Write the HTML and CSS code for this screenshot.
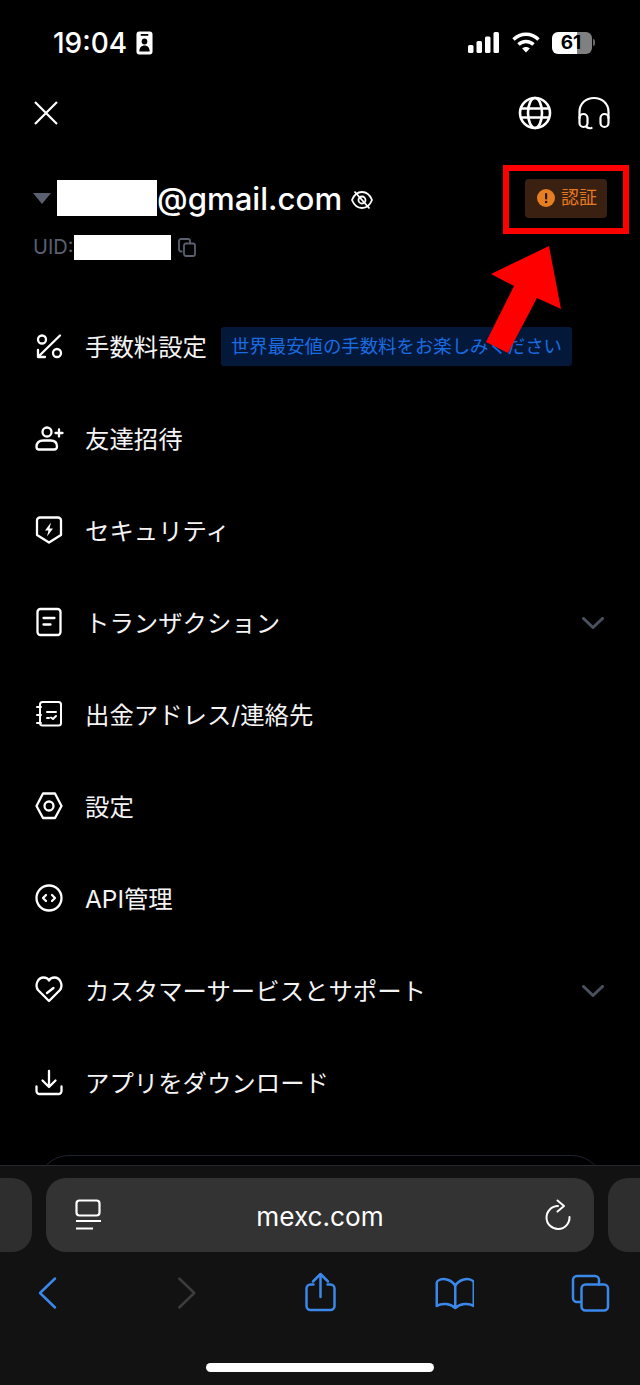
FILE: index.html
```html
<!DOCTYPE html>
<html lang="ja">
<head>
<meta charset="utf-8">
<title>MEXC</title>
<link rel="stylesheet" href="styles.css">
</head>
<body>
<div class="phone">
  <main class="content">
    <div class="status">
      <div class="status-left">
        <span class="time">19:04</span>
        <svg class="id-badge" width="17" height="24" viewBox="0 0 18 24" preserveAspectRatio="none"><rect x="0.5" y="0.5" width="17" height="23" rx="3" fill="#fff"/><rect x="5" y="3" width="8" height="1.8" fill="#000"/><circle cx="9" cy="10.5" r="3" fill="#000"/><path d="M3.5 20.500c0-4 2.500-6 5.500-6s5.500 2 5.500 6z" fill="#000"/></svg>
      </div>
      <div class="status-right">
        <svg width="32" height="21" viewBox="0 0 32 21" fill="#fff"><rect x="0" y="13" width="5.500" height="8" rx="1.500"/><rect x="8.500" y="9" width="5.500" height="12" rx="1.500"/><rect x="17" y="4.500" width="5.500" height="16.500" rx="1.500"/><rect x="25.500" y="0" width="5.500" height="21" rx="1.500"/></svg>
        <svg class="wifi" width="28" height="21" viewBox="0 0 28 21" fill="none" stroke="#fff" stroke-width="3.400"><path d="M1.500 7.500C8.500 .5 19.500 .5 26.500 7.500"/><path d="M6.500 12.500C10.500 8.500 17.500 8.500 21.500 12.500"/><path d="M14 20.500l-3.800-4c2-2 5.600-2 7.600 0z" fill="#fff" stroke="none"/></svg>
        <div class="battery"><span>61</span></div>
        <span class="battery-nub"></span>
      </div>
    </div>

    <div class="topbar">
      <svg width="24" height="24" viewBox="0 0 24 24" fill="none" stroke="#fff" stroke-width="2.200"><path d="M1 1l22 22M23 1L1 23"/></svg>
      <div class="topbar-right">
        <svg width="34" height="34" viewBox="0 0 34 34" fill="none" stroke="#fff" stroke-width="2.600"><circle cx="17" cy="17" r="15"/><ellipse cx="17" cy="17" rx="7" ry="15"/><path d="M2 12.500h30M2 21.500h30"/></svg>
        <svg width="34" height="34" viewBox="0 0 34 34" fill="none" stroke="#fff" stroke-width="2.200" stroke-linecap="round"><path d="M2.500 22V16C2.500 7.500 9 2 17 2s14.500 5.500 14.500 14v6"/><rect x="2.500" y="18" width="8" height="13" rx="4"/><rect x="23.500" y="18" width="8" height="13" rx="4"/><path d="M9.500 31c2 1.500 3.500 1.500 5 1"/></svg>
      </div>
    </div>

    <section class="account">
      <div class="email-row">
        <div class="email-left">
          <span class="caret"></span>
          <span class="mask mask-email"></span>
          <span class="email">@gmail.com</span>
          <svg class="eye" width="22" height="20" viewBox="0 0 22 20" fill="none" stroke="#fff" stroke-width="1.800"><path d="M1 10c2-5 5.500-8 10-8s8 3 10 8c-2 5-5.500 8-10 8s-8-3-10-8z"/><circle cx="11" cy="10" r="3.500"/><path d="M3.500 1.500l15 17"/></svg>
        </div>
        <div class="verify">
          <svg width="18" height="18" viewBox="0 0 18 18"><circle cx="9" cy="9" r="9" fill="#e67e22"/><rect x="8" y="4" width="2.200" height="6.500" rx="1" fill="#2c1608"/><circle cx="9.100" cy="13" r="1.300" fill="#2c1608"/></svg>
          <span>認証</span>
        </div>
      </div>
      <div class="uid-row">
        <span class="uid">UID:</span>
        <span class="mask mask-uid"></span>
        <svg class="copy" width="18" height="19" viewBox="0 0 18 19" fill="none" stroke="#5a6070" stroke-width="1.800"><path d="M4.500 13.500H3a2 2 0 0 1-2-2V3a2 2 0 0 1 2-2h7a2 2 0 0 1 2 2v2"/><rect x="6" y="5.500" width="11" height="12.500" rx="2"/></svg>
      </div>
    </section>

    <nav class="menu">
      <div class="row">
        <svg class="ico" width="32" height="32" viewBox="0 0 32 32"><circle cx="9" cy="9.500" r="4"/><circle cx="24" cy="23" r="4"/><path d="M27 5.500L5 27M5 20v7h7"/></svg>
        <span class="label">手数料設定</span>
        <span class="promo">世界最安値の手数料をお楽しみください</span>
      </div>
      <div class="row">
        <svg class="ico" width="32" height="32" viewBox="0 0 32 32"><circle cx="14" cy="10" r="4.500"/><path d="M3.500 25c0-4.500 3-6.500 7-6.500h7c4 0 6.500 2 6.500 6 0 2-1 3-3 3h-15c-1.500 0-2.500-1-2.500-2.500z"/><path d="M26 7.500v7M22.500 11h7"/></svg>
        <span class="label">友達招待</span>
      </div>
      <div class="row">
        <svg class="ico" width="32" height="32" viewBox="0 0 32 32"><path d="M7 3.500h18a3 3 0 0 1 3 3V21l-12 7.500L4 21V6.500a3 3 0 0 1 3-3z"/><path class="solid" d="M18 8.500l-6 8h3.500l-1.500 6 6-8h-3.500z"/></svg>
        <span class="label">セキュリティ</span>
      </div>
      <div class="row">
        <svg class="ico" width="32" height="32" viewBox="0 0 32 32"><rect x="4.500" y="3" width="23" height="26" rx="3"/><path d="M10.500 12h11M10.500 18.500h7"/></svg>
        <span class="label">トランザクション</span>
        <svg class="chev" width="22" height="12" viewBox="0 0 22 12"><path d="M1.500 1.500L11 10.500l9.500-9"/></svg>
      </div>
      <div class="row">
        <svg class="ico thin" width="32" height="32" viewBox="0 0 32 32"><rect x="7" y="4" width="21" height="23.500" rx="2.500"/><path d="M4 9h4M4 17h4M4 25h4M14 14h9M14 20h2M18 19.500l2 1.500 3-3"/></svg>
        <span class="label">出金アドレス/連絡先</span>
      </div>
      <div class="row">
        <svg class="ico" width="32" height="32" viewBox="0 0 32 32"><path d="M3.500 16L10 3.500h12L28.500 16 22 28H10z"/><circle cx="16" cy="16" r="4.500"/></svg>
        <span class="label">設定</span>
      </div>
      <div class="row">
        <svg class="ico" width="32" height="32" viewBox="0 0 32 32"><circle cx="16" cy="16" r="12.500"/><path d="M13 13l-3 3 3 3M19 13l3 3-3 3"/></svg>
        <span class="label">API管理</span>
      </div>
      <div class="row">
        <svg class="ico" width="32" height="32" viewBox="0 0 32 32"><path d="M16 27L5 16C1.500 11 5 3.500 10.500 3.500c2.500 0 4.500 1 5.500 3 1-2 3-3 5.500-3C27 3.500 30.500 11 27 16z"/><path d="M14 19l6.500-5"/></svg>
        <span class="label">カスタマーサービスとサポート</span>
        <svg class="chev" width="22" height="12" viewBox="0 0 22 12"><path d="M1.500 1.500L11 10.500l9.500-9"/></svg>
      </div>
      <div class="row">
        <svg class="ico" width="32" height="32" viewBox="0 0 32 32"><path d="M16 5v15.500M9.500 14.500l6.500 6.500 6.500-6.500M3.500 20.500V25a3 3 0 0 0 3 3h19a3 3 0 0 0 3-3v-4.500"/></svg>
        <span class="label">アプリをダウンロード</span>
      </div>
    </nav>
    <div class="cta-card"></div>

    <div class="frame"></div>
    <svg class="arrow" width="90" height="120" viewBox="480 240 90 120"><path d="M549 246L491 274 514 286 486 342 508 353 537 298 561 309z" fill="#f00"/></svg>
  </main>

  <footer class="safari">
    <div class="url-row">
      <div class="side-tab side-left"></div>
      <div class="urlbar">
        <svg width="26" height="32" viewBox="0 0 26 32" fill="none" stroke="#fff" stroke-width="2.200"><rect x="1.500" y="1.500" width="23" height="15" rx="3"/><path d="M1 22h25M1 29.500h17"/></svg>
        <span class="host">mexc.com</span>
        <svg width="26" height="32" viewBox="545 1199 26 32" fill="none" stroke="#fff" stroke-width="2" stroke-linecap="round" stroke-linejoin="round"><path d="M558 1206A11.500 11.500 0 1 0 569.500 1217"/><path d="M557.500 1200.500l6.500 5.500-6.500 5.500"/></svg>
      </div>
      <div class="side-tab side-right"></div>
    </div>
    <div class="tools">
      <svg width="40" height="40" viewBox="27 1272 40 40"><path d="M55 1278.500L40 1293l15 14.500"/></svg>
      <svg class="off" width="40" height="40" viewBox="162.750 1272 40 40"><path d="M179 1278.500L194 1293l-15 14.500"/></svg>
      <svg width="40" height="40" viewBox="298.500 1272 40 40"><path d="M313 1284.500h-3a4 4 0 0 0-4 4V1306a4 4 0 0 0 4 4h20a4 4 0 0 0 4-4v-17.500a4 4 0 0 0-4-4h-3M320 1297v-23M312.500 1281.500l7.500-7.500 7.500 7.500"/></svg>
      <svg width="40" height="40" viewBox="434.250 1272 40 40"><path d="M455.500 1286c-3-6.500-12-8.500-17-5.500-1 .5-1.500 1.500-1.500 2.500v23c5-3.500 14-2.500 18.500 2 4.500-4.500 13.500-5.500 18.500-2v-23c0-1-.5-2-1.500-2.500-5-3-14-1-17 5.500zM455.500 1286v21"/></svg>
      <svg width="40" height="40" viewBox="570 1272 40 40"><path d="M581 1302h-4a4 4 0 0 1-4-4v-18a4 4 0 0 1 4-4h18a4 4 0 0 1 4 4v4.500"/><rect x="581.500" y="1284.500" width="26.500" height="26" rx="4"/></svg>
    </div>
    <div class="home-bar"></div>
  </footer>
</div>
</body>
</html>
```

FILE: styles.css
```css
* { box-sizing: border-box; }
html, body { margin: 0; height: 100%; background: #000; }
body { font-family: Inter, "Noto Sans CJK JP", sans-serif; color: #fff; overflow: hidden; }
.phone { width: 640px; height: 1385px; display: flex; flex-direction: column; }
.content { height: 1165px; flex: none; overflow: hidden; position: relative; background: #000; }

.status { height: 84px; display: flex; justify-content: space-between; align-items: center; padding: 1px 45px 0 53px; }
.status-left { display: flex; align-items: center; gap: 9px; }
.time { font-size: 28px; font-weight: 500; line-height: 32px; padding-top: 1px; }
.status-right { display: flex; align-items: center; }
.wifi { margin-left: 12px; }
.battery { margin-left: 12px; width: 40px; height: 22px; border-radius: 6px; background: linear-gradient(90deg, #fff 62%, #808080 62%); display: flex; align-items: center; justify-content: center; }
.battery span { color: #000; font-size: 19px; font-weight: 700; line-height: 22px; margin-left: -2px; }
.battery-nub { width: 2px; height: 7px; margin-left: 1px; background: #666; border-radius: 0 2px 2px 0; }

.topbar { height: 58px; display: flex; justify-content: space-between; align-items: center; padding: 0 29px 0 34px; }
.topbar-right { display: flex; gap: 25px; }

.account { padding: 36px 11px 38px 33px; }
.email-row { height: 40px; display: flex; justify-content: space-between; align-items: center; padding-right: 22px; }
.email-left { display: flex; align-items: center; }
.caret { width: 0; height: 0; border-left: 9.500px solid transparent; border-right: 9.500px solid transparent; border-top: 11px solid #5a6070; margin-right: 6px; }
.mask { display: block; background: #fff; }
.mask-email { width: 100px; height: 36px; }
.email { font-size: 31.200px; font-weight: 500; line-height: 40px; padding-top: 1px; }
.eye { margin: 4px 0 0 9px; }
.verify { width: 82px; height: 39px; background: #3a2010; border-radius: 4px; display: flex; align-items: center; gap: 6px; padding-left: 12px; color: #e57a24; font-size: 18px; line-height: 24px; }
.uid-row { height: 30px; margin-top: 14px; display: flex; align-items: center; }
.uid { font-size: 20px; color: #5a6070; line-height: 24px; width: 41px; }
.mask-uid { width: 97px; height: 25px; }
.copy { margin-left: 7px; }

.row { height: 92px; display: flex; align-items: center; padding: 0 36px 0 33px; font-size: 24.400px; line-height: 32px; color: #f4f4f4; }
.label { padding-top: 1px; white-space: nowrap; }
.ico { margin-right: 20px; flex: none; fill: none; stroke: #fff; stroke-width: 2.300; stroke-linecap: round; stroke-linejoin: round; }
.ico.thin { stroke-width: 2; }
.ico .solid { fill: #fff; stroke: none; }
.promo { margin-left: 14px; height: 39px; width: 351px; background: #04193a; border-radius: 3px; color: #1a6be0; font-size: 18.400px; line-height: 38px; padding-left: 10px; white-space: nowrap; }
.chev { margin: 2px 0 0 auto; fill: none; stroke: #4a5060; stroke-width: 3; stroke-linecap: round; stroke-linejoin: round; }

.cta-card { margin: 27px 36px 0 37px; height: 80px; border: 1.500px solid #1e2230; border-radius: 32px; }

.frame { position: absolute; left: 503px; top: 165px; width: 126px; height: 69px; border: 6px solid #f00; }
.arrow { position: absolute; left: 480px; top: 240px; }

.safari { height: 220px; flex: none; background: #121212; border-top: 1px solid #26282e; padding-top: 12px; position: relative; }
.url-row { display: flex; gap: 14px; }
.side-tab { width: 32px; height: 74px; background: #2e2e2e; }
.side-left { border-radius: 0 20px 20px 0; }
.side-right { border-radius: 20px 0 0 20px; }
.urlbar { width: 548px; height: 74px; background: #333; border-radius: 20px; display: flex; align-items: center; justify-content: space-between; padding: 0 23px 0 29px; }
.host { font-size: 26.200px; line-height: 34px; color: #fff; padding-top: 3px; margin-right: 6px; }
.tools { display: flex; justify-content: space-between; padding: 0 30px 0 27px; margin-top: 20px; }
.tools svg { fill: none; stroke: #3b87ea; stroke-width: 2.500; stroke-linecap: round; stroke-linejoin: round; }
.tools svg.off { stroke: #3c3c3c; }
.home-bar { position: absolute; left: 206px; top: 197px; width: 228px; height: 9px; border-radius: 5px; background: #fff; }
```
